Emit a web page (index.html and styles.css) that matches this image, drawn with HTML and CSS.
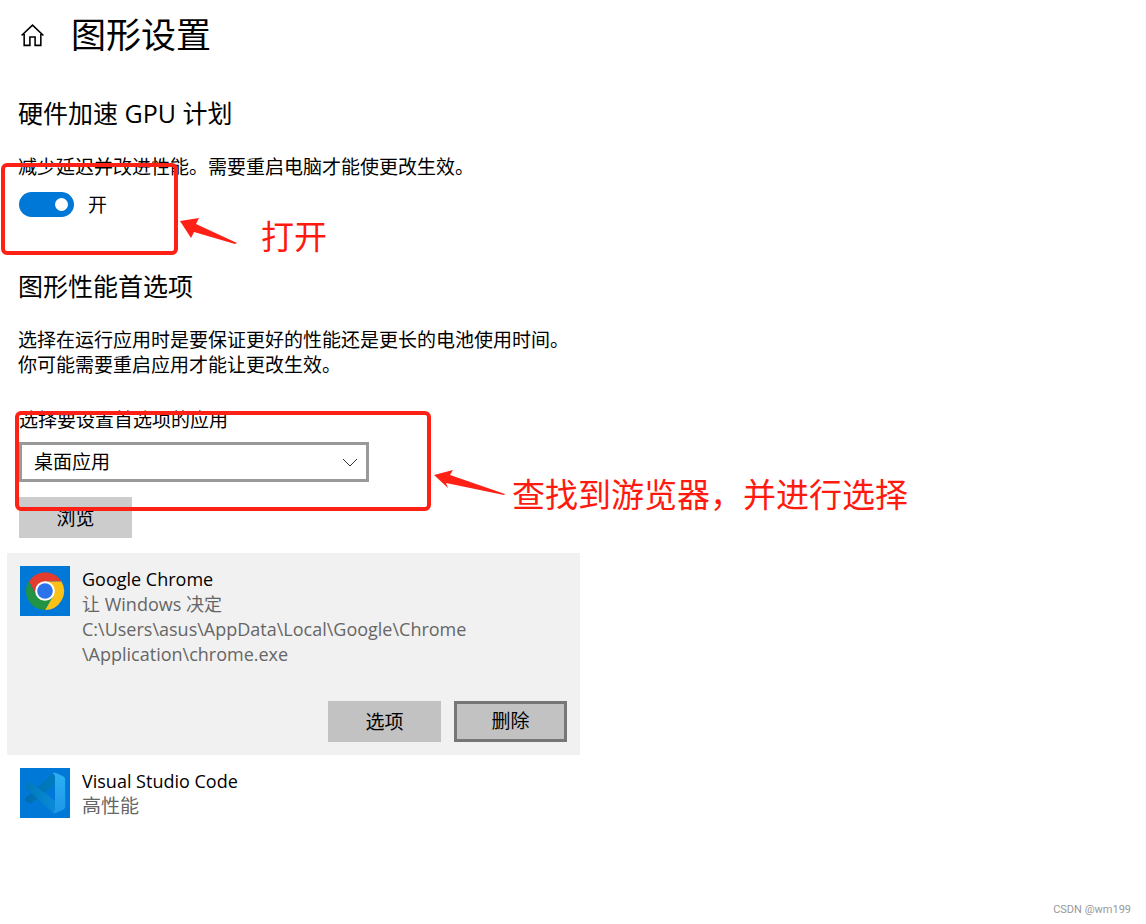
FILE: index.html
```html
<!DOCTYPE html>
<html lang="zh-CN">
<head>
<meta charset="utf-8">
<meta name="viewport" content="width=device-width, initial-scale=1">
<title>图形设置</title>
<link rel="stylesheet" href="styles.css">
</head>
<body>
<main class="page">
  <header class="header">
    <a class="home" href="#" aria-label="主页">
      <svg class="home-icon" viewBox="0 0 24 24" aria-hidden="true"><path d="M1.500 12 12 2l10.500 10M4 10.500V21.500h5.500v-8h5v8H20V10.500"/></svg>
    </a>
    <h1 class="title">图形设置</h1>
  </header>

  <section class="gpu">
    <h2 class="subtitle">硬件加速 GPU 计划</h2>
    <p class="text">减少延迟并改进性能。需要重启电脑才能使更改生效。</p>
    <label class="switch-row"><input class="switch" type="checkbox" role="switch" checked><span>开</span></label>
    <div class="mark mark-switch"></div>
    <div class="note note-switch">
      <svg class="arrow arrow-switch" viewBox="0 0 58 28" aria-hidden="true"><path d="M0 4 19 1 16 7 57 26 55 27 14 15 11 21Z"/></svg>
      <span>打开</span>
    </div>
  </section>

  <section class="prefs">
    <h2 class="subtitle">图形性能首选项</h2>
    <p class="text">选择在运行应用时是要保证更好的性能还是更长的电池使用时间。<br>你可能需要重启应用才能让更改生效。</p>
    <div class="picker">
      <label class="text" for="app-type">选择要设置首选项的应用</label>
      <div class="select-wrap">
        <select class="select" id="app-type"><option>桌面应用</option><option>Microsoft Store 应用</option></select>
        <svg class="chevron" viewBox="0 0 16 9" aria-hidden="true"><path d="m1 1 7 7 7-7"/></svg>
      </div>
      <button class="button browse" type="button">浏览</button>
      <div class="mark mark-picker"></div>
      <div class="note note-picker">
        <svg class="arrow arrow-picker" viewBox="0 0 72 28" aria-hidden="true"><path d="M0 5 19 0 16 5 71 24 70 25 12 13 14 18Z"/></svg>
        <span>查找到游览器，并进行选择</span>
      </div>
    </div>
  </section>

  <ul class="apps">
    <li class="app app-selected">
      <svg class="app-icon" viewBox="0 0 50 50" aria-hidden="true">
        <rect width="50" height="50" fill="#0078d7"/>
        <path fill="#e33b2e" d="M9 15.500a19 19 0 0 1 32.500 0H25l-8.200 14.300Z"/>
        <path fill="#fbc116" d="M41.500 15.500A19 19 0 0 1 25 44l8.200-14.300L25 15.500Z"/>
        <path fill="#229342" d="M25 44A19 19 0 0 1 8.600 15.500l8.200 14.200h16.400Z"/>
        <circle cx="25" cy="25" r="9.800" fill="#fff"/><circle cx="25" cy="25" r="7.800" fill="#2b73e8"/>
      </svg>
      <div class="app-body">
        <h3 class="app-name">Google Chrome</h3>
        <p class="app-detail">让 Windows 决定</p>
        <p class="app-detail">C:\Users\asus\AppData\Local\Google\Chrome<br>\Application\chrome.exe</p>
        <div class="actions">
          <button class="button action" type="button">选项</button>
          <button class="button action focused" type="button">删除</button>
        </div>
      </div>
    </li>
    <li class="app">
      <svg class="app-icon" viewBox="0 0 50 50" aria-hidden="true">
        <defs>
          <linearGradient id="vs-right" x1="0" y1="0" x2="0" y2="1"><stop stop-color="#2cb0f4"/><stop offset="1" stop-color="#1e96e8"/></linearGradient>
          <linearGradient id="vs-down" x1="0" y1="0" x2="1" y2="0"><stop stop-color="#0079b8"/><stop offset="1" stop-color="#0a8ad8"/></linearGradient>
          <linearGradient id="vs-up" x1="0" y1="0" x2="1" y2="0"><stop stop-color="#006cb0"/><stop offset="1" stop-color="#007cc0"/></linearGradient>
        </defs>
        <rect width="50" height="50" fill="#0078d7"/>
        <path fill="url(#vs-up)" d="M35 5Q33 5 31.500 6.500L6 29.500Q4.500 31.500 6 33L8.500 35Q10.500 36 12 34.800L35 17Z"/>
        <path fill="url(#vs-down)" d="M35 45Q33 45 31.500 43.500L6 20.500Q4.500 18.500 6 17L8.500 15Q10.500 14 12 15.200L35 33Z"/>
        <path fill="url(#vs-right)" d="M32.500 44.500Q35 44 35 41.500V8.500Q35 6 32.500 5.300 34 4.500 36 5l7.500 3.500q1.700 1 1.700 3v27q0 2-1.700 3L36 45q-1.800.6-3.500-.5Z"/>
      </svg>
      <div class="app-body">
        <h3 class="app-name">Visual Studio Code</h3>
        <p class="app-detail detail-cjk">高性能</p>
      </div>
    </li>
  </ul>
</main>
<footer class="credit">CSDN @wm199</footer>
</body>
</html>
```
FILE: styles.css
```css
* { box-sizing: border-box; }
body {
  margin: 0;
  min-height: 100vh;
  display: flex;
  flex-direction: column;
  background: #fff;
  color: #000;
  font: 19px/25px "Open Sans", "Noto Sans CJK SC", sans-serif;
}
h1, h2, h3, p, ul { margin: 0; padding: 0; font-weight: 400; }
.page { flex: 1; padding-top: 13px; }
.header { display: flex; align-items: center; gap: 26px; padding-left: 20px; }
.home { display: flex; color: #000; }
.home-icon { width: 25px; height: 25px; fill: none; stroke: currentColor; stroke-width: 1.500; }
.title { font-size: 35px; line-height: 44px; }
.gpu, .prefs { position: relative; padding-left: 18px; }
.gpu { padding-top: 40px; }
.prefs { padding-top: 53px; }
.subtitle { font-size: 25px; line-height: 32px; margin-bottom: 26px; }
.switch-row { display: flex; width: max-content; align-items: center; gap: 14px; margin: 12px 0 0 1px; }
.switch-row span { padding-top: 2px; line-height: 23px; }
.switch {
  appearance: none;
  display: flex;
  justify-content: flex-end;
  align-items: center;
  width: 55px;
  height: 25px;
  margin: 0;
  padding: 6px;
  border-radius: 13px;
  background: #0078d7;
}
.switch::before { content: ""; width: 13px; height: 13px; border-radius: 50%; background: #fff; }
.switch:not(:checked) { justify-content: flex-start; background: #777; }
.picker { position: relative; margin: 30px 0 0 1px; }
.picker label { display: block; }
.select-wrap { position: relative; max-width: 350px; margin: 9px 0 15px; }
.select {
  appearance: none;
  display: block;
  width: 100%;
  height: 40px;
  padding: 0 12px;
  border: 3px solid #999;
  border-radius: 0;
  background: #fff;
  color: #000;
  font: inherit;
}
.chevron { position: absolute; right: 11px; top: 16px; width: 16px; height: 9px; fill: none; stroke: #333; pointer-events: none; }
.button { display: block; width: 113px; height: 41px; padding: 2px 0 0; border: 0; background: #ccc; color: #000; font: inherit; }
.mark { position: absolute; border: 4px solid #ff2116; border-radius: 6px; pointer-events: none; }
.mark-switch { left: 1px; top: 106px; width: 177px; height: 92px; }
.mark-picker { left: -4px; top: 3px; width: 416px; height: 100px; }
.note { position: absolute; display: flex; color: #ff1a10; font-size: 33px; line-height: 40px; white-space: nowrap; }
.note-switch { left: 180px; top: 160px; gap: 23px; }
.note-picker { left: 415px; top: 62px; gap: 6px; }
.note-picker span { padding-top: 5px; }
.arrow { flex: none; fill: #ff2116; }
.arrow-switch { width: 58px; height: 28px; }
.arrow-picker { width: 72px; height: 28px; }
.apps { list-style: none; max-width: 573px; margin: 15px 0 0 7px; }
.app { display: flex; gap: 12px; padding: 13px; }
.app-selected { background: #f1f1f1; }
.app-icon { flex: none; width: 50px; height: 50px; }
.app-body { flex: 1; padding-top: 1px; font-size: 18px; }
.app-name { font-size: 18px; }
.app-detail { color: #666; }
.detail-cjk { font-size: 19px; }
.actions { display: flex; justify-content: flex-end; gap: 13px; margin-top: 34px; }
.action { background: #c2c2c2; font-size: 19px; }
.focused { padding: 0; border: 3px solid #767676; }
.credit { padding: 0 15px 6px; text-align: right; color: #999; font: 11px/16px Roboto, sans-serif; }
```
